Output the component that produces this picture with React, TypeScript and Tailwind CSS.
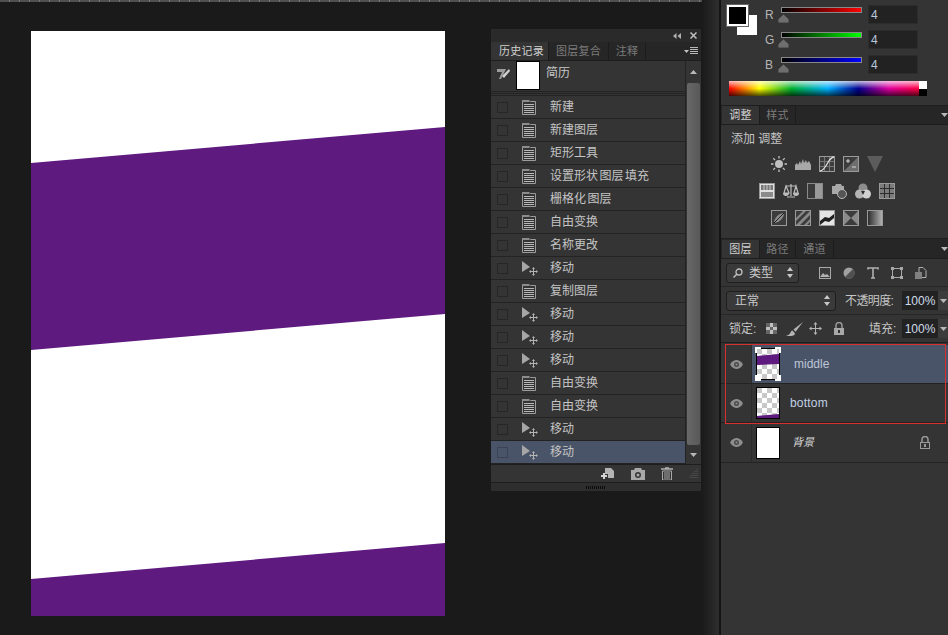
import React from "react";

const PURPLE = "#5f1a80";

const historyRows = [
  { label: "新建", icon: "doc" },
  { label: "新建图层", icon: "doc" },
  { label: "矩形工具", icon: "doc" },
  { label: "设置形状 图层 填充", icon: "doc" },
  { label: "栅格化 图层", icon: "doc" },
  { label: "自由变换", icon: "doc" },
  { label: "名称更改", icon: "doc" },
  { label: "移动", icon: "move" },
  { label: "复制图层", icon: "doc" },
  { label: "移动", icon: "move" },
  { label: "移动", icon: "move" },
  { label: "移动", icon: "move" },
  { label: "自由变换", icon: "doc" },
  { label: "自由变换", icon: "doc" },
  { label: "移动", icon: "move" },
  { label: "移动", icon: "move" },
];

const DocIcon = () => (
  <svg width="14" height="15" viewBox="0 0 14 15" className="shrink-0">
    <path d="M.5 1.500H6.500V.5l2 1h5v13H.5z" fill="#343434" stroke="#9c9c9c" />
    <path d="M0 0h7v2H0z" fill="#8c8c8c" />
    <path d="M2 4.500h10M2 6.500h10M2 8.500h10M2 10.500h10M2 12.500h10" stroke="#b8b8b8" />
  </svg>
);

const MoveIcon = () => (
  <svg width="18" height="15" viewBox="0 0 18 15" className="shrink-0">
    <path d="M0 0l8 6-8 5z" fill="#a6a6a6" />
    <path d="M11.500 7v7M8 10.500h7" stroke="#b4b4b4" />
    <path d="M11.500 6l-1.500 2h3zM11.500 15l-1.500-2h3zM7 10.500l2-1.500v3zM16 10.500l-2-1.500v3z" fill="#b4b4b4" />
  </svg>
);

const EyeIcon = () => (
  <svg width="13" height="9" viewBox="0 0 13 9" className="shrink-0">
    <path d="M0 4.500C2 1 4.500 0 6.500 0s4.500 1 6.500 4.500C11 8 8.500 9 6.500 9S2 8 0 4.500z" fill="#8e8e8e" />
    <circle cx="6.500" cy="4.500" r="2.500" fill="#4a4a4a" />
    <circle cx="6.500" cy="4.500" r="1" fill="#8e8e8e" />
  </svg>
);

const LockIcon = ({ solid }: { solid?: boolean }) => (
  <svg width="12" height="13" viewBox="0 0 12 13" className="shrink-0">
    <path d="M3 6V3.500a3 3 0 016 0V6" fill="none" stroke="#9a9a9a" strokeWidth="1.500" />
    <rect x={solid ? 1 : 1.500} y={solid ? 6 : 6.500} width={solid ? 10 : 9} height={solid ? 7 : 6} fill={solid ? "#a8a8a8" : "none"} stroke="#9a9a9a" strokeWidth={solid ? 0 : 1} />
    {!solid && <rect x="5" y="8" width="2" height="3" fill="#9a9a9a" />}
    {solid && <rect x="5" y="8" width="2" height="3" fill="#343434" />}
  </svg>
);

const PanelMenu = () => (
  <svg width="14" height="8" viewBox="0 0 14 8" className="shrink-0">
    <path d="M0 3h5L2.500 6z" fill="#c4c4c4" />
    <path d="M6 .5h8M6 2.500h8M6 4.500h8M6 6.500h8" stroke="#b8b8b8" />
  </svg>
);

const Caret = () => (
  <svg width="7" height="4" viewBox="0 0 7 4" className="shrink-0">
    <path d="M0 0h7L3.500 4z" fill="#b8b8b8" />
  </svg>
);

const Updown = () => (
  <svg width="6" height="11" viewBox="0 0 6 11" className="shrink-0">
    <path d="M3 0l3 4H0zM3 11L0 7h6z" fill="#c8c8c8" />
  </svg>
);

const Tab = ({ label, active, width }: { label: string; active?: boolean; width: string }) => (
  <div
    className={`flex h-full items-center justify-center border-r border-[#1c1c1c] text-[11px] tracking-[0.3px] ${width} ${
      active ? "bg-[#343434] text-[#d0d0d0]" : "text-[#7c7c7c]"
    }`}
  >
    {label}
  </div>
);

const HistoryRow = ({ label, icon, selected }: { label: string; icon: string; selected?: boolean }) => (
  <div
    className={`flex h-[23px] items-center border-b border-[#232323] pl-[6px] ${
      selected ? "bg-[#4a5468]" : "bg-[#343434]"
    }`}
  >
    <div className={`h-[11px] w-[11px] border ${selected ? "border-[#3a4254]" : "border-[#262626]"}`} />
    <div className="ml-[14px] flex w-[28px] items-center">{icon === "doc" ? <DocIcon /> : <MoveIcon />}</div>
    <span className="text-[12px] leading-none text-[#c4c4c4] [word-spacing:-1.800px]">{label}</span>
  </div>
);

const HistoryPanel = () => (
  <div className="mt-[27px] ml-[46px] flex h-[462px] w-[210px] flex-col rounded-t-[2px] bg-[#343434]">
    <div className="flex h-[13px] items-center justify-end gap-[9px] bg-[#2a2a2a] pr-[4px]">
      <svg width="8" height="6" viewBox="0 0 8 6">
        <path d="M3.500 0v6L0 3zM8 0v6L4.500 3z" fill="#b0b0b0" />
      </svg>
      <svg width="7" height="7" viewBox="0 0 7 7">
        <path d="M.5.5l6 6M6.500.5l-6 6" stroke="#c0c0c0" strokeWidth="1.500" />
      </svg>
    </div>
    <div className="flex h-[19px] items-stretch border-b border-[#1e1e1e] bg-[#262626]">
      <Tab label="历史记录" active width="w-[58px] pl-[4px]" />
      <Tab label="图层复合" width="w-[60px]" />
      <Tab label="注释" width="w-[37px]" />
      <div className="flex flex-1 items-center justify-end pr-[3px]">
        <PanelMenu />
      </div>
    </div>
    <div className="flex min-h-0 flex-1">
      <div className="w-[195px] border-r border-[#232323]">
        <div className="flex h-[33px] border-b-[3px] border-double border-[#222222] pl-[6px]">
          <svg width="14" height="14" viewBox="0 0 14 14" className="mt-[6px]">
            <path d="M0 2h9L4 12h-2l3-7H0z" fill="#9c9c9c" />
            <path d="M12 2L5 9l2 2 6-7z" fill="#d0d0d0" />
          </svg>
          <div className="ml-[5px] h-[29px] w-[24px] border border-black bg-white" />
          <span className="mt-[6px] ml-[6px] text-[12px] leading-none text-[#c8c8c8]">简历</span>
        </div>
        <div className="h-[2px] border-b border-[#232323]" />
        {historyRows.map((row, i) => (
          <HistoryRow key={i} label={row.label} icon={row.icon} selected={i === historyRows.length - 1} />
        ))}
      </div>
      <div className="flex flex-1 flex-col items-center">
        <div className="flex h-[22px] w-full items-center justify-center">
          <div className="rotate-180">
            <Caret />
          </div>
        </div>
        <div className="h-[362px] w-[13px] rounded-[2px] bg-gradient-to-r from-[#686868] to-[#585858]" />
        <div className="flex flex-1 items-center justify-center">
          <Caret />
        </div>
      </div>
    </div>
    <div className="flex h-[19px] items-center justify-end border-y border-[#1e1e1e] pr-[3px]">
      <svg width="15" height="13" viewBox="0 0 15 13" className="mr-[16px]">
        <path d="M5 1h6l3 3v7H8V7H5z" fill="#b4b4b4" />
        <path d="M4 6v6M1 9h6" stroke="#d4d4d4" strokeWidth="2" />
      </svg>
      <svg width="14" height="12" viewBox="0 0 14 12" className="mr-[16px]">
        <path fillRule="evenodd" d="M0 2h3l1-2h6l1 2h3v10H0zM7 4a3 3 0 100 6 3 3 0 000-6z" fill="#a8a8a8" />
        <circle cx="7" cy="7" r="1.500" fill="#a8a8a8" />
      </svg>
      <svg width="12" height="13" viewBox="0 0 12 13" className="mr-[16px]">
        <path d="M0 2h12M4 1h4" stroke="#b0b0b0" strokeWidth="1.500" />
        <path d="M1.500 4h9v9h-9z" fill="none" stroke="#a8a8a8" />
        <path d="M4 5v7M6 5v7M8 5v7" stroke="#a8a8a8" />
      </svg>
      <svg width="9" height="9" viewBox="0 0 9 9">
        <path d="M8 0v1M6 2v1M8 2v1M4 4v1M6 4v1M8 4v1M2 6v1M4 6v1M6 6v1M8 6v1M0 8v1M2 8v1M4 8v1M6 8v1M8 8v1" stroke="#5a5a5a" />
      </svg>
    </div>
    <div className="flex h-[8px] items-center justify-center bg-[#2e2e2e]">
      <div className="h-[3px] w-[20px] bg-[repeating-linear-gradient(90deg,#0c0c0c_0,#0c0c0c_1px,transparent_1px,transparent_2px)]" />
    </div>
  </div>
);

const Canvas = () => (
  <svg width="414" height="585" viewBox="0 0 414 585" className="mt-[29px] shrink-0">
    <rect width="414" height="585" fill="#ffffff" />
    <path d="M0 132L414 96V283L0 319z" fill={PURPLE} />
    <path d="M0 548L414 512V585H0z" fill={PURPLE} />
  </svg>
);

const ColorSlider = ({ name, color }: { name: string; color: string }) => (
  <div className="flex h-[25px] items-start">
    <span className="mt-[4px] w-[16px] text-[12px] leading-none text-[#b4b4b4]">{name}</span>
    <div className="relative mt-[2px] h-[6px] w-[81px] border border-[#888888]" style={{ background: `linear-gradient(90deg,#000,${color})` }}>
      <svg width="11" height="9" viewBox="0 0 11 9" className="absolute top-[6px] left-[-4px]">
        <path d="M5.500 0L11 5v4H0V5z" fill="#6e6e6e" stroke="#1e1e1e" strokeWidth=".6" />
      </svg>
    </div>
    <div className="ml-[6px] flex h-[19px] w-[50px] items-center border border-[#2c2c2c] bg-[#222222] pl-[2px] text-[12px] text-[#b8c8dc]">4</div>
  </div>
);

const ColorPanel = () => (
  <div className="flex h-[106px] flex-col border-b border-[#1e1e1e] bg-[#343434]">
    <div className="flex h-[81px] pt-[5px] pl-[6px]">
      <div className="relative h-[31px] w-[31px] shrink-0">
        <div className="absolute top-[10px] left-[10px] h-[20px] w-[20px] bg-white" />
        <div className="absolute top-0 left-0 h-[21px] w-[21px] border-2 border-white bg-black outline outline-[#666666]" />
      </div>
      <div className="ml-[7px] flex flex-col">
        <ColorSlider name="R" color="#ff0000" />
        <ColorSlider name="G" color="#00ff00" />
        <ColorSlider name="B" color="#0000ff" />
      </div>
    </div>
    <div className="ml-[8px] flex h-[15px] w-[198px]">
      <div className="relative flex-1 bg-[linear-gradient(90deg,#ff0000_0%,#ffff00_16%,#00b030_33%,#00b0ff_52%,#000090_68%,#e000a0_84%,#ff0040_100%)]">
        <div className="absolute inset-0 bg-gradient-to-b from-white/75 via-transparent to-black/70" />
      </div>
      <div className="flex w-[8px] flex-col">
        <div className="flex-1 bg-white" />
        <div className="flex-1 bg-black" />
      </div>
    </div>
  </div>
);

const Adj = ({ children }: { children: React.ReactNode }) => (
  <svg width="16" height="16" viewBox="0 0 16 16" className="shrink-0">
    {children}
  </svg>
);

const Box = <rect x=".5" y=".5" width="15" height="15" fill="#3c3c3c" stroke="#9a9a9a" />;

const AdjustmentsPanel = () => (
  <div className="flex h-[133px] flex-col border-b border-[#1e1e1e] bg-[#343434]">
    <div className="flex h-[19px] items-stretch border-b border-[#1e1e1e] bg-[#262626]">
      <Tab label="调整" active width="w-[38px] ml-[1px]" />
      <Tab label="样式" width="w-[36px]" />
      <div className="flex flex-1 items-center justify-end">
        <Caret />
      </div>
    </div>
    <div className="pt-[6px] pl-[10px] text-[12px] leading-[16px] text-[#c4c4c4]">添加 调整</div>
    <div className="mt-[9px] flex justify-center gap-[8px] pr-[16px]">
      <Adj>
        <circle cx="8" cy="8" r="4" fill="#c0c0c0" />
        <path d="M8 0v2.500M8 13.500V16M0 8h2.500M13.500 8H16M2.300 2.300l1.800 1.800M11.900 11.900l1.800 1.800M13.700 2.300l-1.800 1.800M4.100 11.900l-1.800 1.800" stroke="#c0c0c0" strokeWidth="1.300" />
      </Adj>
      <Adj>
        <path d="M0 14V9l2-2 1 2 2-4 1 3 2-5 1 4 2-3 1 3 2-2 2 4v5z" fill="#a8a8a8" />
      </Adj>
      <Adj>
        {Box}
        <path d="M5.500 1v14M10.500 1v14M1 5.500h14M1 10.500h14" stroke="#777777" />
        <path d="M1 15C7 15 9 1 15 1" fill="none" stroke="#dddddd" strokeWidth="1.300" />
      </Adj>
      <Adj>
        {Box}
        <path d="M1 15L15 1v14z" fill="#6e6e6e" />
        <path d="M3 5h4M5 3v4M9 11h4" stroke="#d4d4d4" />
      </Adj>
      <Adj>
        <path d="M0 0h16L8 16z" fill="#5c5c5c" />
      </Adj>
    </div>
    <div className="mt-[11px] flex justify-center gap-[8px] pr-[16px]">
      <Adj>
        <rect x=".5" y=".5" width="15" height="15" fill="#e0e0e0" stroke="#999999" />
        <path d="M2 2h12v5H2z" fill="#777777" />
        <path d="M5 2v5M8 2v5M11 2v5" stroke="#cccccc" />
        <path d="M2 9h12v5H2z" fill="#8a8a8a" />
      </Adj>
      <Adj>
        <path d="M8 1v12M3 3h10M3 3L1 10h5zM13 3l-2 7h4zM4 14h8" fill="none" stroke="#bdbdbd" strokeWidth="1.200" />
        <path d="M0 10a3 3 0 006 0zM10 10a3 3 0 006 0z" fill="#bdbdbd" />
      </Adj>
      <Adj>
        <rect x=".5" y=".5" width="15" height="15" fill="#3a3a3a" stroke="#8a8a8a" />
        <rect x="8" y="1" width="7" height="14" fill="#9a9a9a" />
      </Adj>
      <Adj>
        <path d="M1 3h3l1-2h5l1 2h2v8H1z" fill="#a8a8a8" />
        <circle cx="11" cy="11" r="4.500" fill="#555555" stroke="#b8b8b8" />
      </Adj>
      <Adj>
        <circle cx="8" cy="5" r="4.500" fill="#8c8c8c" />
        <circle cx="4.500" cy="11" r="4.500" fill="#b4b4b4" />
        <circle cx="11.500" cy="11" r="4.500" fill="#d0d0d0" />
        <path d="M6 8h4l-2 4z" fill="#2c2c2c" />
      </Adj>
      <Adj>
        <rect x=".5" y=".5" width="15" height="15" fill="#7c7c7c" stroke="#9a9a9a" />
        <path d="M1 5.500h14M1 10.500h14M5.500 1v14M10.500 1v14" stroke="#2c2c2c" />
      </Adj>
    </div>
    <div className="mt-[11px] flex justify-center gap-[8px] pr-[16px]">
      <Adj>
        {Box}
        <path d="M3 13C3 7 9 3 13 3 13 9 7 13 3 13z" fill="#8c8c8c" />
        <path d="M3 13L13 3" stroke="#222222" />
      </Adj>
      <Adj>
        {Box}
        <path d="M1 8L8 1h3L1 11zM1 15L15 1v4L5 15zM9 15l6-6v3l-3 3z" fill="#888888" />
      </Adj>
      <Adj>
        <rect x=".5" y=".5" width="15" height="15" fill="#e4e4e4" stroke="#999999" />
        <path d="M1 11l5-4 4 1 5-4v4l-5 4-4-1-5 4z" fill="#202020" />
      </Adj>
      <Adj>
        {Box}
        <path d="M1 1l7 7 7-7v14L8 8l-7 7z" fill="#8a8a8a" />
      </Adj>
      <Adj>
        <rect x=".5" y=".5" width="15" height="15" fill="#555555" stroke="#999999" />
        <rect x="1" y="1" width="14" height="14" fill="url(#fade)" />
        <defs>
          <linearGradient id="fade">
            <stop offset="0" stopColor="#2e2e2e" />
            <stop offset="1" stopColor="#b0b0b0" />
          </linearGradient>
        </defs>
      </Adj>
    </div>
  </div>
);

const Thumb = ({ kind, selected }: { kind: "middle" | "bottom" | "white"; selected?: boolean }) => (
  <div className="relative h-[32px] w-[24px] shrink-0 border border-black bg-white">
    {kind !== "white" && (
      <svg width="22" height="30" viewBox="0 0 22 30" className="block">
        <defs>
          <pattern id={`chk-${kind}`} width="10" height="10" patternUnits="userSpaceOnUse">
            <rect width="10" height="10" fill="#ffffff" />
            <rect width="5" height="5" fill="#c8c8c8" />
            <rect x="5" y="5" width="5" height="5" fill="#c8c8c8" />
          </pattern>
        </defs>
        <rect width="22" height="30" fill={`url(#chk-${kind})`} />
        {kind === "middle" && <path d="M0 7L22 5v10L0 16z" fill={PURPLE} />}
        {kind === "bottom" && <path d="M0 28L22 26v4H0z" fill={PURPLE} />}
      </svg>
    )}
    {selected && (
      <>
        <div className="absolute top-[-2px] left-[-2px] h-[6px] w-[6px] border-t-2 border-l-2 border-white" />
        <div className="absolute top-[-2px] right-[-2px] h-[6px] w-[6px] border-t-2 border-r-2 border-white" />
        <div className="absolute bottom-[-2px] left-[-2px] h-[6px] w-[6px] border-b-2 border-l-2 border-white" />
        <div className="absolute right-[-2px] bottom-[-2px] h-[6px] w-[6px] border-r-2 border-b-2 border-white" />
      </>
    )}
  </div>
);

const LayerRow = ({ children, selected, height }: { children: React.ReactNode; selected?: boolean; height: string }) => (
  <div className={`flex items-center border-b border-[#232323] ${height}`}>
    <div className="flex h-full w-[31px] shrink-0 items-center justify-center border-r border-[#2a2a2a] bg-[#343434]">
      <EyeIcon />
    </div>
    <div className={`flex h-full flex-1 items-center pl-[4px] ${selected ? "bg-[#4a5468]" : ""}`}>{children}</div>
  </div>
);

const PctInput = () => (
  <div className="flex h-[19px] shrink-0">
    <div className="flex w-[36px] items-center justify-center bg-[#222222] text-[12px] text-[#d0dcea]">100%</div>
    <div className="flex w-[10px] items-center justify-center bg-[#3c3c3c]">
      <Caret />
    </div>
  </div>
);

const selectCls =
  "flex h-[20px] shrink-0 items-center justify-between rounded-[3px] border border-[#1e1e1e] bg-[#3a3a3a] text-[12px] text-[#c8c8c8]";

const LayersPanel = () => (
  <div className="flex flex-1 flex-col bg-[#343434]">
    <div className="flex h-[19px] items-stretch border-b border-[#1e1e1e] bg-[#262626]">
      <Tab label="图层" active width="w-[38px] ml-[1px]" />
      <Tab label="路径" width="w-[36px]" />
      <Tab label="通道" width="w-[38px]" />
      <div className="flex flex-1 items-center justify-end">
        <Caret />
      </div>
    </div>
    <div className="flex h-[28px] items-center border-b border-[#262626] pl-[5px]">
      <div className={`${selectCls} w-[73px] pr-[5px] pl-[6px]`}>
        <span className="flex items-center gap-[6px]">
          <svg width="10" height="10" viewBox="0 0 10 10">
            <circle cx="6" cy="4" r="3" fill="none" stroke="#c0c0c0" strokeWidth="1.300" />
            <path d="M4 6L.5 9.500" stroke="#c0c0c0" strokeWidth="1.500" />
          </svg>
          类型
        </span>
        <Updown />
      </div>
      <div className="ml-[20px] flex items-center gap-[12px]">
        <svg width="12" height="12" viewBox="0 0 12 12">
          <rect x=".5" y=".5" width="11" height="11" fill="#3a3a3a" stroke="#a8a8a8" />
          <path d="M1 10l3-4 2 2 2-1 3 3z" fill="#b0b0b0" />
        </svg>
        <svg width="12" height="12" viewBox="0 0 12 12">
          <circle cx="6" cy="6" r="5.500" fill="#a0a0a0" />
          <path d="M10 2a5.500 5.500 0 01-8 8z" fill="#505050" />
        </svg>
        <svg width="12" height="12" viewBox="0 0 12 12">
          <path d="M1 2.500V1h10v1.500M6 1v10M4 11h4" fill="none" stroke="#b0b0b0" strokeWidth="1.600" />
        </svg>
        <svg width="12" height="12" viewBox="0 0 12 12">
          <rect x="1.500" y="1.500" width="9" height="9" fill="none" stroke="#a8a8a8" />
          <path d="M0 0h3v3H0zM9 0h3v3H9zM0 9h3v3H0zM9 9h3v3H9z" fill="#a8a8a8" />
        </svg>
        <svg width="12" height="12" viewBox="0 0 12 12">
          <path d="M4 .5h4l3 3v7H4z" fill="none" stroke="#b0b0b0" />
          <rect x="0" y="5" width="7" height="7" fill="#808080" />
        </svg>
      </div>
    </div>
    <div className="flex h-[28px] items-center border-b border-[#262626] pl-[5px]">
      <div className={`${selectCls} w-[110px] pr-[5px] pl-[8px]`}>
        正常
        <Updown />
      </div>
      <span className="ml-[9px] w-[57px] shrink-0 text-[12px] tracking-[-0.6px] whitespace-nowrap text-[#c4c4c4]">不透明度:</span>
      <PctInput />
    </div>
    <div className="flex h-[27px] items-center pl-[8px]">
      <span className="w-[32px] shrink-0 text-[12px] whitespace-nowrap text-[#c4c4c4]">锁定:</span>
      <svg width="11" height="11" viewBox="0 0 11 11" className="ml-[5px] shrink-0">
        <rect width="11" height="11" fill="#c0c0c0" />
        <path d="M0 0h4v4H0zM7 0h4v4H7zM4 4h3v3H4zM0 7h4v4H0zM7 7h4v4H7z" fill="#666666" />
      </svg>
      <svg width="17" height="14" viewBox="0 0 16 13" className="ml-[9px] shrink-0">
        <path d="M16 0L7 7l2 2zM6 8c-2 0-1 4-6 5h5c3 0 4-2 3-3z" fill="#b4b4b4" />
      </svg>
      <svg width="13" height="13" viewBox="0 0 13 13" className="ml-[6px] shrink-0">
        <path d="M6.500 2v9M2 6.500h9" stroke="#b4b4b4" />
        <path d="M6.500 0l2 2.500h-4zM6.500 13l-2-2.500h4zM0 6.500l2.500-2v4zM13 6.500l-2.500 2v-4z" fill="#b4b4b4" />
      </svg>
      <div className="ml-[11px]">
        <LockIcon solid />
      </div>
      <span className="ml-[24px] w-[33px] shrink-0 text-[12px] whitespace-nowrap text-[#c4c4c4]">填充:</span>
      <PctInput />
    </div>
    <div className="relative border-t border-[#1e1e1e]">
      <div className="h-[2px]" />
      <LayerRow selected height="h-[39px]">
        <Thumb kind="middle" selected />
        <span className="ml-[14px] font-['Liberation_Sans',sans-serif] text-[12px] text-[#bcc6d6]">middle</span>
      </LayerRow>
      <LayerRow height="h-[39px]">
        <Thumb kind="bottom" />
        <span className="ml-[10px] font-['Liberation_Sans',sans-serif] text-[12px] tracking-[0.2px] text-[#c0d0e4]">bottom</span>
      </LayerRow>
      <LayerRow height="h-[40px]">
        <Thumb kind="white" />
        <span className="ml-[12px] text-[11px] text-[#d8d8d8] italic">背景</span>
        <div className="mr-[17px] ml-auto">
          <LockIcon />
        </div>
      </LayerRow>
      <div className="pointer-events-none absolute top-[1px] left-[4px] h-[80px] w-[221px] border border-[#d92f2f]" />
    </div>
  </div>
);

export default function App() {
  return (
    <div className="flex h-[635px] w-[948px] overflow-hidden bg-[#1a1a1a] font-['Liberation_Sans','Noto_Sans_CJK_SC',sans-serif]">
      <div className="flex w-[702px] shrink-0 flex-col">
        <div className="h-[2px] shrink-0 bg-[repeating-linear-gradient(90deg,#505050_0,#505050_9px,#777777_9px,#777777_10px)]" />
        <div className="flex items-start pl-[31px]">
          <Canvas />
          <HistoryPanel />
        </div>
      </div>
      <div className="w-[17px] shrink-0 bg-gradient-to-r from-[#1a1a1a] to-[#2e2e2e]" />
      <div className="flex w-[229px] shrink-0 flex-col border-l-2 border-[#141414]">
        <ColorPanel />
        <AdjustmentsPanel />
        <div className="h-[1px] bg-[#262626]" />
        <LayersPanel />
      </div>
    </div>
  );
}
